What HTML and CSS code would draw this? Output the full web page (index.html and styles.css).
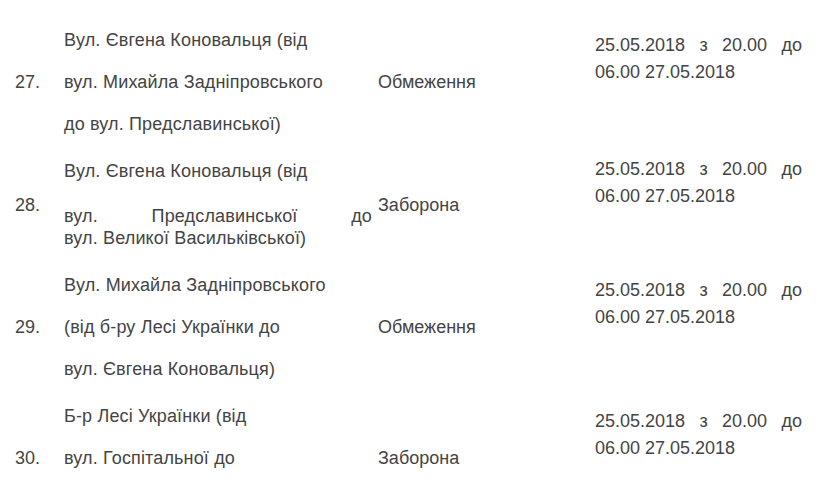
FILE: index.html
```html
<!DOCTYPE html>
<html lang="uk">
<head>
<meta charset="utf-8">
<title>Обмеження руху</title>
<link rel="stylesheet" href="styles.css">
</head>
<body>
<div class="table">
  <div class="row">
    <div class="num">27.</div>
    <div class="street">Вул. Євгена Коновальця (від<br>вул. Михайла Задніпровського<br>до вул. Предславинської)</div>
    <div class="kind">Обмеження</div>
    <div class="period">25.05.2018 з 20.00 до 06.00 27.05.2018</div>
  </div>
  <div class="row row-tight">
    <div class="num">28.</div>
    <div class="street">
      <p>Вул. Євгена Коновальця (від</p>
      <p class="just">вул. Предславинської до вул.&nbsp;Великої&nbsp;Васильківської)</p>
    </div>
    <div class="kind">Заборона</div>
    <div class="period">25.05.2018 з 20.00 до 06.00 27.05.2018</div>
  </div>
  <div class="row">
    <div class="num">29.</div>
    <div class="street">Вул. Михайла Задніпровського<br>(від б-ру Лесі Українки до<br>вул. Євгена Коновальця)</div>
    <div class="kind">Обмеження</div>
    <div class="period">25.05.2018 з 20.00 до 06.00 27.05.2018</div>
  </div>
  <div class="row">
    <div class="num">30.</div>
    <div class="street">Б-р Лесі Українки (від<br>вул. Госпітальної до<br>вул. Михайла Задніпровського)</div>
    <div class="kind">Заборона</div>
    <div class="period">25.05.2018 з 20.00 до 06.00 27.05.2018</div>
  </div>
</div>
</body>
</html>
```

FILE: styles.css
```css
html, body {
  margin: 0;
  background: #ffffff;
}

body {
  font-family: "Liberation Sans", Arial, sans-serif;
  font-size: 18px;
  color: #444444;
  overflow: hidden;
}

.table {
  display: flex;
  flex-direction: column;
  gap: 5px;
  padding: 19px 0 0 15px;
}

.row {
  display: grid;
  grid-template-columns: 49px 314px 217px 207px;
}

.num,
.kind {
  align-self: center;
  line-height: 42px;
}

.street {
  line-height: 42px;
  padding-right: 6px;
  letter-spacing: 0.15px;
}

.street p {
  margin: 0;
}

.street .just {
  line-height: 22px;
  text-align: justify;
  margin: 13px 0 10px;
}

.period {
  align-self: start;
  line-height: 27px;
  text-align: justify;
  margin-top: 13px;
}

.row-tight .period {
  margin-top: 6px;
}
```
